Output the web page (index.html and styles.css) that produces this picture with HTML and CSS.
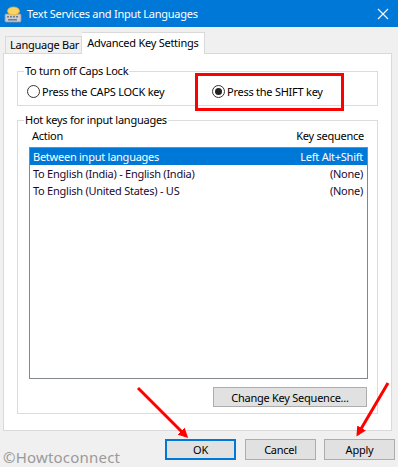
FILE: index.html
```html
<!DOCTYPE html>
<html>
<head>
<meta charset="utf-8">
<link rel="stylesheet" href="styles.css">
</head>
<body>
<div class="window">
  <div class="titlebar">
    <svg class="app-icon" width="18" height="18" viewBox="0 0 18 18">
      <rect x="1" y="9" width="16" height="8" rx="1" fill="#c9ced6" stroke="#8d96a3" stroke-width="0.8"/>
      <rect x="3" y="11" width="2" height="1.5" fill="#6f7a88"/>
      <rect x="6" y="11" width="2" height="1.5" fill="#6f7a88"/>
      <rect x="9" y="11" width="2" height="1.5" fill="#6f7a88"/>
      <rect x="12" y="11" width="2" height="1.5" fill="#6f7a88"/>
      <rect x="4" y="14" width="9" height="1.5" fill="#6f7a88"/>
      <ellipse cx="9.5" cy="6" rx="6" ry="4" fill="#f7d46a" stroke="#e0ad2e" stroke-width="0.8"/>
    </svg>
    <span class="title">Text Services and Input Languages</span>
    <svg class="close" width="12" height="12" viewBox="0 0 12 12">
      <path d="M1 1 L11 11 M11 1 L1 11" stroke="#fff" stroke-width="1.1"/>
    </svg>
  </div>

  <div class="tabs">
    <div class="tab">Language Bar</div>
    <div class="tab active">Advanced Key Settings</div>
  </div>

  <div class="panel">
    <fieldset class="group caps">
      <legend>To turn off Caps Lock</legend>
      <div class="radios">
        <label class="radio first"><span class="dot"></span>Press the CAPS LOCK key</label>
        <label class="radio"><span class="dot checked"></span>Press the SHIFT key</label>
      </div>
    </fieldset>

    <fieldset class="group hotkeys">
      <legend>Hot keys for input languages</legend>
      <div class="header">
        <span>Action</span>
        <span>Key sequence</span>
      </div>
      <div class="list">
        <div class="row selected"><span>Between input languages</span><span>Left Alt+Shift</span></div>
        <div class="row"><span>To English (India) - English (India)</span><span>(None)</span></div>
        <div class="row"><span>To English (United States) - US</span><span>(None)</span></div>
      </div>
      <div class="change-row">
        <button class="btn change">Change Key Sequence...</button>
      </div>
    </fieldset>
  </div>

  <div class="buttons">
    <button class="btn dlg default">OK</button>
    <button class="btn dlg">Cancel</button>
    <button class="btn dlg">Apply</button>
  </div>

  <div class="highlight"></div>
  <div class="watermark">©Howtoconnect</div>
  <svg class="arrows" width="398" height="467" viewBox="0 0 398 467">
    <defs>
      <marker id="head" markerWidth="10" markerHeight="10" refX="7" refY="5" orient="auto" markerUnits="userSpaceOnUse">
        <path d="M0 0 L10 5 L0 10 Z" fill="#f00"/>
      </marker>
    </defs>
    <line x1="138" y1="388" x2="186" y2="436" stroke="#f00" stroke-width="3" marker-end="url(#head)"/>
    <line x1="388" y1="383" x2="358" y2="434" stroke="#f00" stroke-width="3" marker-end="url(#head)"/>
  </svg>
</div>
</body>
</html>
```

FILE: styles.css
```css
* { box-sizing: border-box; }
html, body { margin: 0; padding: 0; }
body {
  width: 398px;
  height: 467px;
  overflow: hidden;
  background: #f0f0f0;
  font-family: "Noto Sans", "Liberation Sans", sans-serif;
  font-size: 11px;
  letter-spacing: -0.25px;
  color: #000;
}
.window {
  position: relative;
  width: 398px;
  height: 467px;
}
.titlebar {
  height: 27px;
  background: #0078d7;
  display: flex;
  align-items: center;
  padding-left: 4px;
  color: #fff;
}
.app-icon { flex: none; margin-top: 1px; }
.title {
  margin-left: 5px;
  font-size: 11px;
  flex: 1;
}
.close { margin-right: 9px; }

.tabs {
  height: 26px;
  display: flex;
  align-items: flex-end;
  padding-left: 5px;
}
.tab {
  height: 17px;
  line-height: 15px;
  padding: 0 2px 0 4px;
  border: 1px solid #d9d9d9;
  border-bottom: none;
  background: #f0f0f0;
  margin-bottom: 0;
  white-space: nowrap;
}
.tab.active {
  height: 22px;
  line-height: 20px;
  background: #fff;
  border-left: none;
  padding: 0 5px 0 5px;
  margin-bottom: -1px;
  position: relative;
  z-index: 1;
}
.panel {
  margin-left: 3px;
  width: 389px;
  height: 378px;
  background: #fff;
  border: 1px solid #d9d9d9;
  padding: 10px 0 0 13px;
}
.group {
  margin: 0;
  width: 361px;
  border: 1px solid #dcdcdc;
  padding: 0;
  min-width: 0;
}
.group legend {
  margin-left: 6px;
  padding: 0 1px;
  line-height: 14px;
  height: 14px;
}
.radios {
  display: flex;
  align-items: center;
  height: 18px;
  margin: 4px 0 5px 9px;
}
.radio {
  display: flex;
  align-items: center;
  white-space: nowrap;
}
.radio.first { width: 185px; }
.dot {
  width: 13px;
  height: 13px;
  border: 1px solid #333;
  border-radius: 50%;
  background: #fff;
  margin-right: 2px;
  display: flex;
  align-items: center;
  justify-content: center;
}
.dot.checked::after {
  content: "";
  width: 7px;
  height: 7px;
  border-radius: 50%;
  background: #222;
}
.hotkeys { margin-top: 7px; }
.header {
  display: flex;
  justify-content: space-between;
  height: 16px;
  line-height: 16px;
  margin: 1px 0 0 0;
  padding: 0 13px 0 14px;
}
.list {
  margin: 3px 9px 0 11px;
  height: 232px;
  border: 1px solid #828790;
  padding: 0;
}
.row {
  display: flex;
  justify-content: space-between;
  height: 17px;
  line-height: 17px;
  padding: 0 4px 0 3px;
  color: #1b0a30;
  white-space: nowrap;
}
.row.selected {
  background: #0078d7;
  color: #fff;
}
.change-row {
  display: flex;
  justify-content: flex-end;
  padding: 8px 10px 6px 0;
}
.btn {
  font-family: inherit;
  font-size: 11px;
  letter-spacing: -0.25px;
  background: #e1e1e1;
  border: 1px solid #adadad;
  color: #000;
  padding: 0;
  margin: 0;
}
.change {
  width: 154px;
  height: 20px;
}
.buttons {
  display: flex;
  padding: 8px 0 0 165px;
  gap: 8px;
}
.dlg {
  width: 71px;
  height: 21px;
}
.dlg.default {
  border: 2px solid #0078d7;
  margin-right: 1px;
}
.highlight {
  position: absolute;
  left: 195px;
  top: 73px;
  width: 149px;
  height: 38px;
  border: 3px solid #f00;
}
.watermark {
  position: absolute;
  left: 3px;
  top: 447px;
  font-size: 15px;
  color: #9a9a9a;
  letter-spacing: 0.2px;
}
.arrows {
  position: absolute;
  left: 0;
  top: 0;
  pointer-events: none;
}
```
